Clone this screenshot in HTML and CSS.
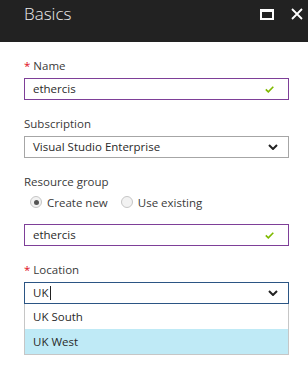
FILE: index.html
```html
<!DOCTYPE html>
<html lang="en">
<head>
  <meta charset="UTF-8" />
  <title>Basics</title>
  <link rel="stylesheet" href="styles.css">
</head>
<body>
  <div class="blade-header">
    <h1 class="blade-title">Basics</h1>
    <div class="blade-actions">
      <span class="icon-max"></span>
      <svg class="icon-close" width="12" height="12" viewBox="0 0 12 12">
        <path d="M1 1 L11 11 M11 1 L1 11" stroke="#fff" stroke-width="1.8" fill="none"/>
      </svg>
    </div>
  </div>

  <div class="blade-body">
    <div class="field">
      <div class="label"><span class="req">*</span> Name</div>
      <div class="box box-valid">
        <span class="value">ethercis</span>
        <svg class="check" width="9" height="7" viewBox="0 0 9 7">
          <path d="M0.8 3.4 L3.3 5.9 L8.3 0.8" stroke="#7fba00" stroke-width="1.6" fill="none"/>
        </svg>
      </div>
    </div>

    <div class="field">
      <div class="label">Subscription</div>
      <div class="box box-select">
        <span class="value">Visual Studio Enterprise</span>
        <svg class="chevron" width="10" height="6" viewBox="0 0 10 6">
          <path d="M1 1 L5 5 L9 1" stroke="#222" stroke-width="2" fill="none"/>
        </svg>
      </div>
    </div>

    <div class="field">
      <div class="label">Resource group</div>
      <div class="radios">
        <label class="radio"><span class="dot dot-on"></span>Create new</label>
        <label class="radio"><span class="dot"></span>Use existing</label>
      </div>
      <div class="box box-valid">
        <span class="value">ethercis</span>
        <svg class="check" width="9" height="7" viewBox="0 0 9 7">
          <path d="M0.8 3.4 L3.3 5.9 L8.3 0.8" stroke="#7fba00" stroke-width="1.6" fill="none"/>
        </svg>
      </div>
    </div>

    <div class="field">
      <div class="label"><span class="req">*</span> Location</div>
      <div class="box box-focus">
        <span class="value">UK<span class="caret"></span></span>
        <svg class="chevron" width="10" height="6" viewBox="0 0 10 6">
          <path d="M1 1 L5 5 L9 1" stroke="#222" stroke-width="2" fill="none"/>
        </svg>
      </div>
      <ul class="options">
        <li>UK South</li>
        <li class="selected">UK West</li>
      </ul>
    </div>
  </div>
</body>
</html>
```

FILE: styles.css
```css
body {
  margin: 0;
  width: 308px;
  background: #fff;
  font-family: 'Open Sans', 'Noto Sans', sans-serif;
  font-size: 11.5px;
  color: #333;
}

.blade-header {
  height: 42px;
  background: #222222;
  display: flex;
  align-items: flex-start;
  justify-content: space-between;
  padding: 0 5px 0 24px;
}

.blade-title {
  margin: 0;
  font-weight: 300;
  font-size: 17px;
  line-height: 28px;
  color: #ececec;
}

.blade-actions {
  display: flex;
  align-items: center;
  gap: 17px;
  padding-top: 8px;
}

.icon-max {
  display: block;
  width: 10px;
  height: 6px;
  border: 2px solid #fff;
  border-top-width: 3px;
}

.icon-close {
  display: block;
}

.blade-body {
  padding: 16px 19px 0 24px;
}

.field {
  margin-bottom: 16px;
}

.label {
  line-height: 16px;
  margin-bottom: 4px;
  color: #3a3a3a;
}

.req {
  color: #e00b1c;
}

.box {
  height: 20px;
  border: 1px solid #a6a6a6;
  display: flex;
  align-items: center;
  justify-content: space-between;
  padding: 0 10px 0 8px;
}

.box-valid {
  border-color: #7e3f98;
}

.box-focus {
  border-color: #2b5584;
}

.value {
  line-height: 20px;
  color: #2a2a2a;
}

.caret {
  display: inline-block;
  width: 1px;
  height: 14px;
  background: #222;
  margin-left: 2px;
  vertical-align: -3px;
}

.check {
  display: block;
  margin-right: 4px;
}

.chevron {
  display: block;
}

.radios {
  display: flex;
  gap: 13px;
  height: 16px;
  margin: 2px 0 14px 6px;
}

.radio {
  display: flex;
  align-items: center;
  gap: 5px;
  color: #3a3a3a;
}

.dot {
  width: 10px;
  height: 10px;
  border: 1px solid #c6c6c6;
  border-radius: 50%;
  background: #f2f2f2;
  position: relative;
}

.dot-on::after {
  content: "";
  position: absolute;
  left: 2.5px;
  top: 2.5px;
  width: 5px;
  height: 5px;
  border-radius: 50%;
  background: #555;
}

.options {
  list-style: none;
  margin: 0;
  padding: 0;
  border: 1px solid #c6c6c6;
  border-top: none;
}

.options li {
  height: 25px;
  line-height: 25px;
  padding-left: 8px;
  color: #2a2a2a;
}

.options li.selected {
  background: #bfeaf6;
}
```
